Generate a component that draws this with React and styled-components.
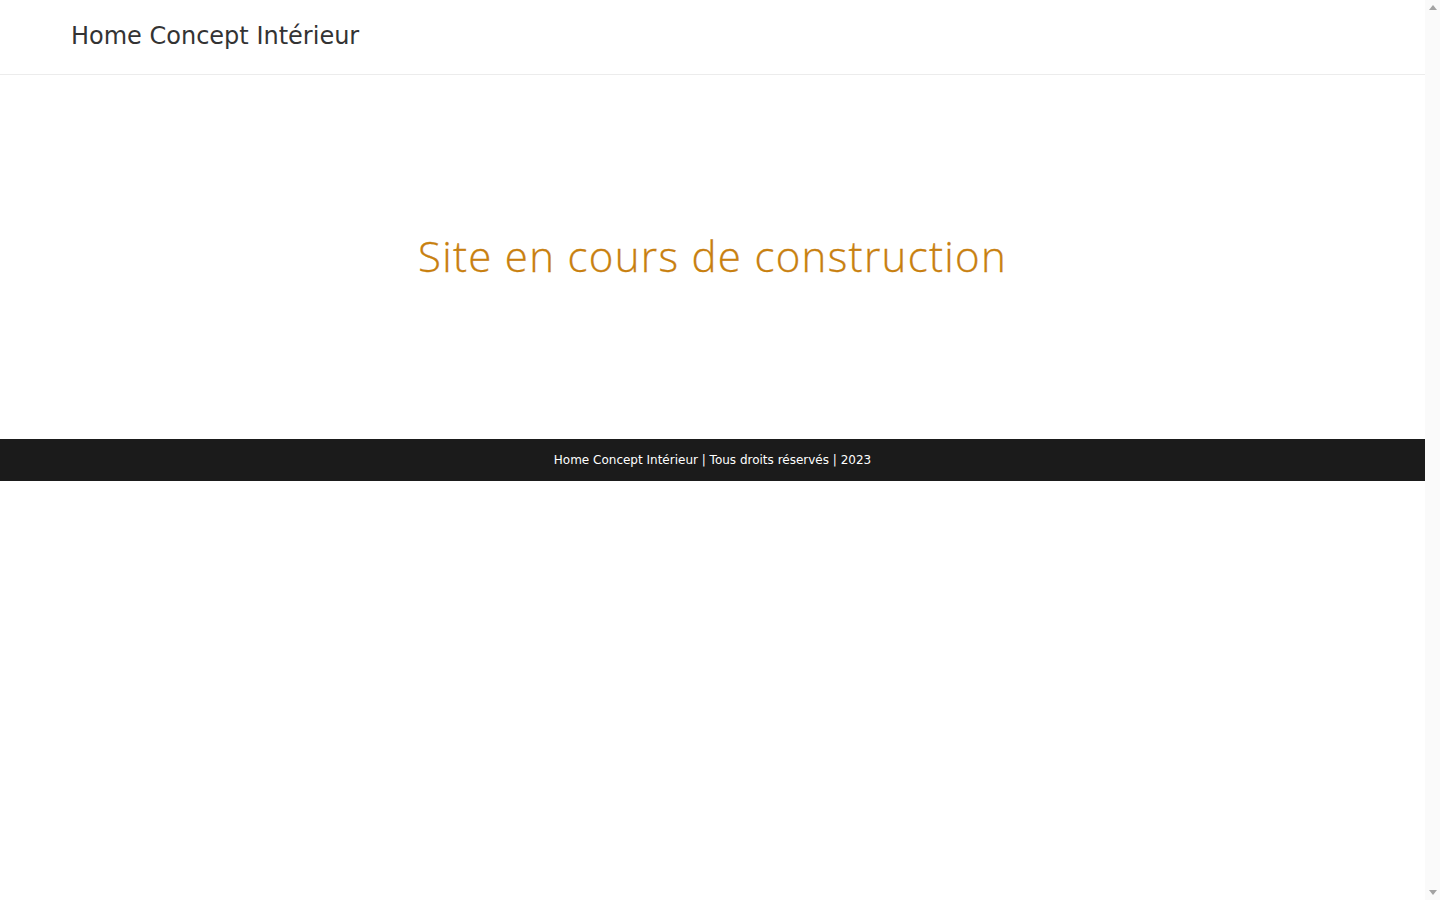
import styled, { createGlobalStyle } from "styled-components";

const GlobalStyle = createGlobalStyle`
  html {
    overflow-y: scroll;
  }
  body {
    margin: 0 15px 0 0;
    background: #fff;
    font-family: "DejaVu Sans", sans-serif;
  }
`;

// Header
const Header = styled.header`
  height: 74px;
  display: flex;
  align-items: center;
  padding: 0 71px;
  border-bottom: 1px solid #ececec;
`;

const Brand = styled.div`
  font-size: 24px;
  color: #333;
  margin-top: -3px;
`;

// Main
const Main = styled.main`
  height: 364px;
  display: flex;
  align-items: center;
  justify-content: center;
`;

const Heading = styled.h1`
  margin: -4px 0 0;
  font-family: "Open Sans", sans-serif;
  font-weight: 300;
  font-size: 42px;
  color: #c8800f;
  letter-spacing: 1.3px;
  -webkit-text-stroke: 0.3px #c8800f;
`;

// Footer
const Footer = styled.footer`
  height: 42px;
  background: #1b1b1b;
  color: #fff;
  font-size: 12px;
  display: flex;
  align-items: center;
  justify-content: center;
`;

// Window scrollbar track
const ScrollTrack = styled.div`
  position: fixed;
  top: 0;
  right: 0;
  width: 15px;
  height: 100vh;
  background: #fafafa;
  display: flex;
  flex-direction: column;
  justify-content: space-between;
  align-items: center;
  padding: 5px 0;
  box-sizing: border-box;
`;

const Arrow = styled.span`
  width: 0;
  height: 0;
  border-left: 4px solid transparent;
  border-right: 4px solid transparent;
  ${(p) =>
    p.down
      ? "border-top: 5px solid #a3a3a3;"
      : "border-bottom: 5px solid #a3a3a3;"}
`;

export default function App() {
  return (
    <>
      <GlobalStyle />
      <Header>
        <Brand>Home Concept Intérieur</Brand>
      </Header>
      <Main>
        <Heading>Site en cours de construction</Heading>
      </Main>
      <Footer>Home Concept Intérieur | Tous droits réservés | 2023</Footer>
      <ScrollTrack>
        <Arrow />
        <Arrow down />
      </ScrollTrack>
    </>
  );
}
